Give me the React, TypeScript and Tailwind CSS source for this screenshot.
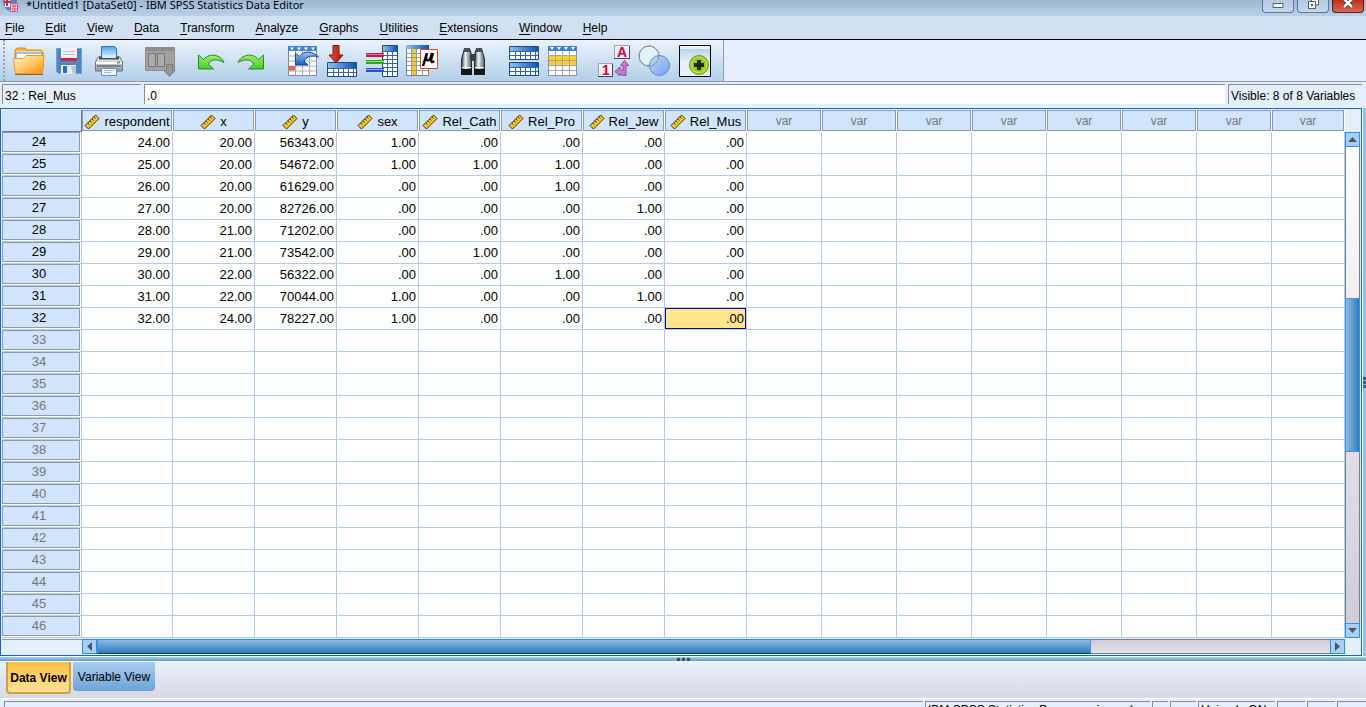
import { ReactNode } from 'react';

const MENUS = ['File', 'Edit', 'View', 'Data', 'Transform', 'Analyze', 'Graphs', 'Utilities', 'Extensions', 'Window', 'Help'];

const VARIABLES = ['respondent', 'x', 'y', 'sex', 'Rel_Cath', 'Rel_Pro', 'Rel_Jew', 'Rel_Mus'];

const EMPTY_VARIABLES = 8;

const CASES: string[][] = [
    ['24.00', '20.00', '56343.00', '1.00', '.00', '.00', '.00', '.00'],
    ['25.00', '20.00', '54672.00', '1.00', '1.00', '1.00', '.00', '.00'],
    ['26.00', '20.00', '61629.00', '.00', '.00', '1.00', '.00', '.00'],
    ['27.00', '20.00', '82726.00', '.00', '.00', '.00', '1.00', '.00'],
    ['28.00', '21.00', '71202.00', '.00', '.00', '.00', '.00', '.00'],
    ['29.00', '21.00', '73542.00', '.00', '1.00', '.00', '.00', '.00'],
    ['30.00', '22.00', '56322.00', '.00', '.00', '1.00', '.00', '.00'],
    ['31.00', '22.00', '70044.00', '1.00', '.00', '.00', '1.00', '.00'],
    ['32.00', '24.00', '78227.00', '1.00', '.00', '.00', '.00', '.00'],
];

const FIRST_ROW = 24;
const ROW_COUNT = 23;

function Icon({children}: { children: ReactNode }) {
    return (
        <svg width="34" height="34" viewBox="0 0 34 34" fill="none" aria-hidden="true">
            {children}
        </svg>
    )
}

function Defs() {
    return (
        <svg width="0" height="0" className="absolute" aria-hidden="true">
            <defs>
                <linearGradient id="folder" x1="0" y1="0" x2="1" y2="1">
                    <stop offset="0" stopColor="#fff3d0"/>
                    <stop offset="0.55" stopColor="#ffc65c"/>
                    <stop offset="1" stopColor="#f58a12"/>
                </linearGradient>
                <linearGradient id="blueHead" x1="0" y1="0" x2="1" y2="0">
                    <stop offset="0" stopColor="#8fc0ee"/>
                    <stop offset="1" stopColor="#0a55b4"/>
                </linearGradient>
                <linearGradient id="green" x1="0" y1="0" x2="0" y2="1">
                    <stop offset="0" stopColor="#a4ea78"/>
                    <stop offset="1" stopColor="#3fd024"/>
                </linearGradient>
                <linearGradient id="blueArrow" x1="0" y1="0" x2="0" y2="1">
                    <stop offset="0" stopColor="#9cc6f5"/>
                    <stop offset="1" stopColor="#1d5cc0"/>
                </linearGradient>
                <linearGradient id="red" x1="0" y1="0" x2="1" y2="0">
                    <stop offset="0" stopColor="#e85a48"/>
                    <stop offset="1" stopColor="#a81008"/>
                </linearGradient>
                <linearGradient id="paper" x1="0" y1="0" x2="0" y2="1">
                    <stop offset="0" stopColor="#4da6ef"/>
                    <stop offset="1" stopColor="#e0f2ff"/>
                </linearGradient>
                <linearGradient id="tube" x1="0" y1="0" x2="1" y2="0">
                    <stop offset="0" stopColor="#39434f"/>
                    <stop offset="0.4" stopColor="#eef2f5"/>
                    <stop offset="1" stopColor="#4d5863"/>
                </linearGradient>
                <linearGradient id="venn" x1="0" y1="0" x2="1" y2="1">
                    <stop offset="0" stopColor="#c6dcfa"/>
                    <stop offset="1" stopColor="#6d9fee"/>
                </linearGradient>
                <linearGradient id="steel" x1="0" y1="0" x2="0" y2="1">
                    <stop offset="0" stopColor="#f2f4f6"/>
                    <stop offset="1" stopColor="#8f969e"/>
                </linearGradient>
                <linearGradient id="panel" x1="0" y1="0" x2="0" y2="1">
                    <stop offset="0" stopColor="#b8d2ee"/>
                    <stop offset="1" stopColor="#e8f1fa"/>
                </linearGradient>
            </defs>
        </svg>
    )
}

function OpenIcon() {
    return (
        <Icon>
            <path d="M3 9V6l2-2h8l2 2h14l2 2v17H3z" fill="#f9b33c" stroke="#d9861a"/>
            <path d="M4 7h26v2H4z" fill="#ffe08a"/>
            <path d="M4 9h26v8H4z" fill="#fff" stroke="#4d9add"/>
            <path d="M1.500 14.500H11l3-3h18l-1.500 18h-27z" fill="url(#folder)" stroke="#ef9a2c"/>
            <path d="M3 30.500h28" stroke="#9e5a12"/>
        </Icon>
    )
}

function SaveIcon() {
    return (
        <Icon>
            <path d="M4.500 4.500h25v25h-23l-2-2z" fill="#4a86c0" stroke="#6ea3d2"/>
            <path d="M9 4h16v12H9z" fill="#f4f4f4"/>
            <path d="M11 7.500h12M11 10.500h12" stroke="#c2c2c2"/>
            <path d="M9 15.500h16" stroke="#d81f3f" strokeWidth="3"/>
            <path d="M9 21h15v9H9z" fill="#e8eaec"/>
            <path d="M11 22h4v7h-4z" fill="#2f6eae"/>
            <path d="M19 22h5v8h-3z" fill="#bfc4ca"/>
        </Icon>
    )
}

function PrintIcon() {
    return (
        <Icon>
            <path d="M9.500 2.500h13l2 2V14h-15z" fill="url(#paper)" stroke="#2a78c0"/>
            <path d="M6 13h22l2.500 5v9h-27v-9z" fill="url(#steel)" stroke="#6f757c"/>
            <path d="M7 12.500h20v3H7z" fill="#454c55"/>
            <path d="M10 11h14v3H10z" fill="#d3eaff"/>
            <path d="M4 18h26v2H4z" fill="#fff"/>
            <path d="M5 22h24" stroke="#7b8087" strokeWidth="2"/>
            <path d="M25 18.500h3" stroke="#38c02a" strokeWidth="2"/>
            <path d="M9.500 24.500h15v7h-15z" fill="#f4f8fc" stroke="#6a8db0"/>
            <path d="M12 26.500h10M12 28.500h7" stroke="#9db9d4"/>
        </Icon>
    )
}

function RecallIcon() {
    return (
        <Icon>
            <path d="M2.500 3.500h29v23h-29z" fill="#a2a2a2" stroke="#8e8e8e"/>
            <path d="M3 4h28v3H3z" fill="#8d8d8d"/>
            <path d="M5.500 9.500h7v13h-7zM14.500 9.500h7v13h-7z" fill="#acacac" stroke="#777"/>
            <path d="M23.500 20.500h6v6h2.500l-5.500 6-5.500-6h2.500z" fill="#999" stroke="#777"/>
        </Icon>
    )
}

function UndoIcon({flip = false}: { flip?: boolean }) {
    return (
        <Icon>
            <path
                d={flip
                    ? 'M29.500 11v14h-15l5-4.500C18 15.500 12 14 4 18.500 7 11 18 8 24.500 15.500z'
                    : 'M4.500 11v14h15l-5-4.500C16 15.500 22 14 30 18.500 27 11 16 8 9.500 15.500z'}
                fill="url(#green)" stroke="#209018"/>
        </Icon>
    )
}

function GoToCaseIcon() {
    return (
        <Icon>
            <path d="M3.500 2.500h28v29h-28z" fill="#fff" stroke="#7c8aa5"/>
            <path d="M3 2h29v5H3z" fill="#3f80d8"/>
            <path d="M5 3.500h4l-2 3zM12 3.500h4l-2 3zM19 3.500h4l-2 3zM26 3.500h4l-2 3z" fill="#fff"/>
            <path d="M10.500 7v24M17.500 7v24M24.500 7v24M4 12h27M4 17h27M4 22h27M4 27h27" stroke="#a5adbb"/>
            <path d="M4 22h6v4.500H4z" fill="#f45b62"/>
            <path d="M10.500 9v12H23l-4-4c3-5 9-6 14.500-4C28 7 19 6 14.500 12.500z" fill="url(#blueArrow)" stroke="#174a9c"/>
        </Icon>
    )
}

function GoToVariableIcon() {
    return (
        <Icon>
            <path d="M2.500 18.500h29v14h-29z" fill="#fff" stroke="#1b4a8c"/>
            <path d="M3 19h28v5H3z" fill="url(#blueHead)"/>
            <path d="M8.500 24v8M13.500 24v8M18.500 24v8M23.500 24v8M28.500 24v8M3 24.500h28M3 28.500h28" stroke="#3565a8"/>
            <path d="M8 1.500h6V11h4l-7 8-7-8h4z" fill="url(#red)" stroke="#8c120c"/>
        </Icon>
    )
}

function VariablesIcon() {
    return (
        <Icon>
            <path d="M17.500 1.500h15v31h-15z" fill="#fff" stroke="#1b4a8c"/>
            <path d="M18 2h14v5H18z" fill="url(#blueHead)"/>
            <path d="M22.500 7v25M27.500 7v25M18 7.500h14M18 11.500h14M18 15.500h14M18 19.500h14M18 23.500h14M18 27.500h14" stroke="#3565a8"/>
            <path d="M1 11h18" stroke="#b81f44" strokeWidth="4"/>
            <path d="M1 10.500h18" stroke="#f0708c"/>
            <path d="M1 18h18" stroke="#37a224" strokeWidth="4"/>
            <path d="M1 17.500h18" stroke="#8fe07c"/>
            <path d="M1 26h18" stroke="#3350b8" strokeWidth="4"/>
            <path d="M1 25.500h18" stroke="#8aa4f0"/>
        </Icon>
    )
}

function StatisticsIcon() {
    return (
        <Icon>
            <path d="M1.500 1.500h22v30h-22z" fill="#fff" stroke="#7c8088"/>
            <path d="M1 1h23v4H1z" fill="url(#blueHead)"/>
            <path d="M6 5h5v26H6z" fill="#f2c736"/>
            <path d="M6.500 5v26M11.500 5v26M17.500 5v26M2 9.500h21M2 13.500h21M2 17.500h21M2 21.500h21M2 26.500h21" stroke="#999"/>
            <path d="M15.500 5.500h17v19h-17z" fill="#fff" stroke="#e2431c"/>
            <path d="M22 9l-4 13M21.500 11c-2 6 3 9 5.500-2M28 9l-2 7c0 2 1 3 3 1" stroke="#000" strokeWidth="2.500"/>
        </Icon>
    )
}

function FindIcon() {
    return (
        <Icon>
            <path d="M8.500 4.500h5l2 6v20h-10V15z" fill="url(#tube)" stroke="#252a30"/>
            <path d="M20.500 4.500h5l3 10.500v15.500h-10v-20z" fill="url(#tube)" stroke="#252a30"/>
            <path d="M14 10h6v7h-6z" fill="#39404c"/>
            <path d="M8 4h6v4H8zM20 4h6v4h-6z" fill="#465061"/>
            <path d="M5 25h11v6H5zM18 25h11v6H18z" fill="#15181b"/>
            <path d="M6 23.500h9M19 23.500h9" stroke="#f4f4f4"/>
        </Icon>
    )
}

function SplitIcon() {
    return (
        <Icon>
            {[2, 18].map((y) => (
                <g key={y} transform={`translate(0 ${y})`}>
                    <path d="M2.500.5h29v13h-29z" fill="#fff" stroke="#1b4a8c"/>
                    <path d="M3 1h28v4H3z" fill="url(#blueHead)"/>
                    <path d="M8.500 5v8M13.500 5v8M18.500 5v8M23.500 5v8M28.500 5v8M3 5.500h28M3 9.500h28" stroke="#3565a8"/>
                </g>
            ))}
        </Icon>
    )
}

function SelectCasesIcon() {
    return (
        <Icon>
            <path d="M1.500 2.500h28v29h-28z" fill="#fff" stroke="#8a93a0"/>
            <path d="M1 2h29v5H1z" fill="#3f80d8"/>
            <path d="M3 3h4l-2 3zM10 3h4l-2 3zM17 3h4l-2 3zM24 3h4l-2 3z" fill="#fff"/>
            <path d="M2 12h27v9H2z" fill="#fbd02e"/>
            <path d="M8.500 7v24M15.500 7v24M22.500 7v24M2 11.500h27M2 16.500h27M2 21.500h27M2 26.500h27" stroke="#a5a89f"/>
        </Icon>
    )
}

function ValueLabelsIcon() {
    return (
        <Icon>
            <path d="M16.500 1.500h15v13h-15zM.5 19.500h14v13H.5z" fill="#f2f2f6" stroke="#9ca2ae"/>
            <path d="M16 14.500h16M31.500 2v13M0 32.500h15M14.500 20v13" stroke="#41485c"/>
            <text x="19" y="13" fontSize="14" fontWeight="700" fontFamily="Liberation Sans, sans-serif" fill="#d4003c">A</text>
            <text x="4" y="31" fontSize="14" fontWeight="700" fontFamily="Liberation Sans, sans-serif" fill="#d4003c">1</text>
            <path d="M26.500 16.500l4 5h-2.500v10h-3l-3-2v2.500l-5-4.500 5-4.500v2.500l3 1v-5h-2.500z" fill="#c57fcc" stroke="#94489e"/>
        </Icon>
    )
}

function VariableSetsIcon() {
    return (
        <Icon>
            <circle cx="11" cy="12" r="10" fill="#e4f0fc" stroke="#8190a6"/>
            <circle cx="21.500" cy="21.500" r="10" fill="url(#venn)" stroke="#6f86b4"/>
            <circle cx="11" cy="12" r="10" stroke="#8190a6"/>
        </Icon>
    )
}

function AddonIcon() {
    return (
        <Icon>
            <path d="M1.500 1.500h31v31h-31z" fill="#e8f1fa" stroke="#000"/>
            <path d="M2 5h30v13H2z" fill="url(#panel)"/>
            <circle cx="21" cy="21" r="9.500" fill="#9acb22" stroke="#5f9412"/>
            <circle cx="21" cy="21" r="8" stroke="#c4e85e"/>
            <path d="M16 21h10M21 16v10" stroke="#1d2a10" strokeWidth="4"/>
        </Icon>
    )
}

function RulerIcon() {
    return (
        <svg width="16" height="16" viewBox="0 0 16 16" fill="none" aria-hidden="true" className="shrink-0">
            <path d="M1 11.500L11.500 1 15 4.500 4.500 15z" fill="#f7c52c" stroke="#3d3208"/>
            <path d="M4 9l1.500 1.500M6 7l1.500 1.500M8 5l1.500 1.500M10 3l1.500 1.500" stroke="#3d3208"/>
        </svg>
    )
}

type Tool = { label: string, icon: ReactNode }

const TOOL_GROUPS: Tool[][] = [
    [
        {label: 'Open', icon: <OpenIcon/>},
        {label: 'Save', icon: <SaveIcon/>},
        {label: 'Print', icon: <PrintIcon/>},
    ],
    [{label: 'Recall dialogs', icon: <RecallIcon/>}],
    [
        {label: 'Undo', icon: <UndoIcon/>},
        {label: 'Redo', icon: <UndoIcon flip/>},
    ],
    [
        {label: 'Go to case', icon: <GoToCaseIcon/>},
        {label: 'Go to variable', icon: <GoToVariableIcon/>},
        {label: 'Variables', icon: <VariablesIcon/>},
        {label: 'Run statistics', icon: <StatisticsIcon/>},
    ],
    [{label: 'Find', icon: <FindIcon/>}],
    [
        {label: 'Split file', icon: <SplitIcon/>},
        {label: 'Select cases', icon: <SelectCasesIcon/>},
    ],
    [
        {label: 'Value labels', icon: <ValueLabelsIcon/>},
        {label: 'Variable sets', icon: <VariableSetsIcon/>},
        {label: 'Customize', icon: <AddonIcon/>},
    ],
];

function TitleBar() {
    return (
        <header className="flex h-4 justify-between bg-linear-to-b from-[#9db8d4] to-[#b9d0e8]">
            <div className="flex items-start gap-2 pl-0.5">
                <svg width="16" height="12" viewBox="0 0 16 12" fill="none" aria-hidden="true">
                    <path d="M1 0h14v5c-1 5-8 7-11 4-2-2-3-6-3-9z" fill="#4f86c0"/>
                    <path d="M3 0h5v7H3z" fill="#fff"/>
                    <path d="M2 2h6M5 0v6" stroke="#d0203c" strokeWidth="2"/>
                    <path d="M8.500 3.500h7v8h-7z" fill="#fff" stroke="#d0506c"/>
                    <path d="M11 4v7M13 4v7M9 6h6M9 9h6" stroke="#d0506c"/>
                </svg>
                <h1 className="font-['Noto_Sans',sans-serif] text-[11px] leading-[10px] whitespace-nowrap">
                    *Untitled1 [DataSet0] - IBM SPSS Statistics Data Editor
                </h1>
            </div>
            <div className="flex h-[13px] gap-[3px] pr-0.5">
                <button type="button" aria-label="Minimize"
                        className="flex w-8 justify-center rounded-b border border-t-0 border-[#5f7896] bg-linear-to-b from-[#b4cae2] to-[#c4d8ec]">
                    <svg width="12" height="9" viewBox="0 0 12 9" aria-hidden="true">
                        <path d="M1 3.500h10v4H1z" fill="#fff" stroke="#505a68"/>
                    </svg>
                </button>
                <button type="button" aria-label="Restore"
                        className="flex w-8 justify-center rounded-b border border-t-0 border-[#5f7896] bg-linear-to-b from-[#b4cae2] to-[#c4d8ec]">
                    <svg width="13" height="9" viewBox="0 0 13 9" aria-hidden="true">
                        <path d="M4.500-2h7v7h-7z" fill="#fff" stroke="#505a68"/>
                        <path d="M1.500 1.500h7v7h-7z" fill="#fff" stroke="#505a68"/>
                        <path d="M4 4h2v2H4z" fill="#505a68"/>
                    </svg>
                </button>
                <button type="button" aria-label="Close"
                        className="flex w-8 justify-center rounded-b border border-t-0 border-[#5c1c1c] bg-linear-to-b from-[#b82f1c] to-[#d8694a]">
                    <svg width="12" height="9" viewBox="0 0 12 9" aria-hidden="true">
                        <path d="M2-1l8 8M10-1L2 7" stroke="#4a3038" strokeWidth="4"/>
                        <path d="M2-1l8 8M10-1L2 7" stroke="#fff" strokeWidth="2.500"/>
                    </svg>
                </button>
            </div>
        </header>
    )
}

function MenuBar() {
    return (
        <nav className="flex h-6 items-center gap-[21px] border-b border-black bg-[#cfe1f2] pl-[5px]">
            {MENUS.map((menu) => (
                <button key={menu} type="button">
                    <span className="underline underline-offset-2">{menu[0]}</span>{menu.slice(1)}
                </button>
            ))}
        </nav>
    )
}

function Toolbar() {
    return (
        <div className="flex h-[42px] border-b border-[#8f9bab]">
            <div className="flex items-center gap-[11px] border-r border-[#8f9bab] bg-linear-to-b from-[#eaf3fc] to-[#b3cfea] pr-2 pl-[3px]">
                <div className="-mr-2 h-full w-[3px] border-l-2 border-dotted border-[#93a5ba]"/>
                {TOOL_GROUPS.map((group) => (
                    <div key={group[0].label} className="flex">
                        {group.map((tool) => (
                            <button key={tool.label} type="button" aria-label={tool.label}
                                    className="flex w-10 justify-center">
                                {tool.icon}
                            </button>
                        ))}
                    </div>
                ))}
            </div>
        </div>
    )
}

function CellEditor() {
    return (
        <div className="flex h-[26px] gap-[3px] pt-0.5 pb-1 pl-0.5">
            <label htmlFor="cell" className="flex w-[139px] items-center border-t border-l border-[#8c8c8c] pt-0.5 pl-0.5">
                32 : Rel_Mus
            </label>
            <input id="cell" type="text" defaultValue=".0"
                   className="min-w-0 flex-1 border-t border-l border-[#8c8c8c] bg-white pt-0.5 pl-0.5"/>
            <div className="flex w-[134px] items-center border-t border-l border-[#8c8c8c] pt-0.5 pl-0.5 whitespace-nowrap">
                Visible: 8 of 8 Variables
            </div>
            <div className="w-px"/>
        </div>
    )
}

function DataTable() {
    const rows = Array.from({length: ROW_COUNT}, (_, i) => FIRST_ROW + i);
    const empty = Array.from({length: EMPTY_VARIABLES}, (_, i) => i);

    return (
        <table className="w-full table-fixed border-separate border-spacing-0 text-[13px] leading-4">
            <colgroup>
                <col className="w-20"/>
                <col className="w-[91px]"/>
                {VARIABLES.slice(1).map((name) => <col key={name} className="w-[82px]"/>)}
                {empty.slice(1).map((i) => <col key={i} className="w-[75px]"/>)}
                <col/>
            </colgroup>
            <thead>
                <tr className="h-[22px]">
                    <th className="border-r border-b border-[#6d7890] bg-[#d0e4fc] p-0"/>
                    {VARIABLES.map((name) => (
                        <th key={name} scope="col" className="p-0 font-normal">
                            <div className="mr-px mb-px flex h-[21px] items-center justify-center gap-1 border border-[#8e98b0] bg-[#d0e4fc] pt-0.5">
                                <RulerIcon/>
                                {name}
                            </div>
                        </th>
                    ))}
                    {empty.map((i) => (
                        <th key={i} scope="col" className="p-0 text-xs font-normal text-[#777]">
                            <div className="mr-px mb-px flex h-[21px] items-center justify-center border border-[#8e98b0] bg-[#d0e4fc]">
                                var
                            </div>
                        </th>
                    ))}
                </tr>
            </thead>
            <tbody>
                {rows.map((row, i) => {
                    const values = CASES[i];
                    return (
                        <tr key={row} className="h-[22px]">
                            <th scope="row" className="border-r border-b border-[#b0cce8] p-0 font-normal">
                                <div className={`mr-px mb-px flex h-5 items-center justify-center border border-[#8e98b0] bg-[#d0e4fc] pr-1 ${values ? 'text-black' : 'text-[#777]'}`}>
                                    {row}
                                </div>
                            </th>
                            {VARIABLES.map((name, col) => {
                                const selected = row === 32 && name === 'Rel_Mus';
                                return (
                                    <td key={name}
                                        className={`border-r border-b border-[#b0cce8] p-0 pr-0.5 text-right ${selected ? 'bg-[#ffe48c] bg-clip-padding shadow-[inset_0_0_0_1px_#0a0aa0]' : ''}`}>
                                        {values?.[col]}
                                    </td>
                                );
                            })}
                            {empty.map((n) => <td key={n} className="border-r border-b border-[#b0cce8] p-0"/>)}
                        </tr>
                    );
                })}
            </tbody>
        </table>
    )
}

function ScrollArrow({label, path}: { label: string, path: string }) {
    return (
        <button type="button" aria-label={label}
                className="flex size-[15px] shrink-0 items-center justify-center border border-[#2f8fe8] bg-[#a6d0fb]">
            <svg width="9" height="9" viewBox="0 0 9 9" aria-hidden="true">
                <path d={path} fill="#555"/>
            </svg>
        </button>
    )
}

function VerticalScrollbar() {
    return (
        <div className="flex w-[15px] flex-col pt-[22px]">
            <ScrollArrow label="Scroll up" path="M0 7l4.500-5L9 7z"/>
            <div className="flex flex-1 flex-col border-x border-[#7b7f88] bg-linear-to-b from-white to-[#cfcddb]">
                <div className="grow-[152]"/>
                <div className="-mx-px grow-[152] border border-[#3d94e2] bg-linear-to-r from-[#8bbbe4] to-[#2f7cbe]"/>
                <div className="grow-[172]"/>
            </div>
            <ScrollArrow label="Scroll down" path="M0 2l4.500 5L9 2z"/>
        </div>
    )
}

function HorizontalScrollbar() {
    return (
        <div className="flex h-[15px] flex-1">
            <ScrollArrow label="Scroll left" path="M7 0L2 4.500 7 9z"/>
            <div className="flex flex-1 border-y border-[#7b7f88] bg-linear-to-b from-[#cfcddb] to-[#e2e0ea]">
                <div className="-my-px grow-[994] border border-t-[#2f8fe8] border-r-[#3d94e2] border-b-[#10406c] border-l-[#3d94e2] bg-linear-to-b from-[#8bbbe4] to-[#2f7cbe]"/>
                <div className="grow-[239]"/>
            </div>
            <ScrollArrow label="Scroll right" path="M2 0l5 4.500L2 9z"/>
        </div>
    )
}

function StatusBar() {
    const cell = 'border-t border-l border-[#8c8c8c] pl-0.5 whitespace-nowrap';
    return (
        <footer className="flex h-[9px] gap-0.5 border-t border-white pt-0.5 pl-1">
            <div className={`${cell} flex-1`}/>
            <div className={`${cell} w-[225px]`}>IBM SPSS Statistics Processor is ready</div>
            <div className={`${cell} w-4`}/>
            <div className={`${cell} w-[26px]`}/>
            <div className={`${cell} w-[77px]`}>Unicode:ON</div>
            <div className={`${cell} w-7`}/>
            <div className={`${cell} w-7`}/>
            <div className={`${cell} w-[29px]`}/>
        </footer>
    )
}

export default function App() {
    return (
        <div className="flex h-screen flex-col overflow-hidden bg-[#e3effc] font-['Liberation_Sans',Arial,sans-serif] text-xs text-black">
            <Defs/>
            <TitleBar/>
            <MenuBar/>
            <Toolbar/>
            <CellEditor/>
            <main className="flex min-h-0 flex-1">
                <div className="flex min-w-0 flex-1 flex-col border border-[#1467b4] pt-px pr-px pl-px">
                    <div className="flex min-h-0 flex-1">
                        <div className="min-w-0 flex-1 overflow-hidden bg-white">
                            <DataTable/>
                        </div>
                        <VerticalScrollbar/>
                    </div>
                    <div className="flex h-[17px] pt-px">
                        <div className="w-20 border-t border-[#8e98b0]"/>
                        <HorizontalScrollbar/>
                        <div className="w-[15px]"/>
                    </div>
                </div>
                <div className="flex w-1 flex-col items-center justify-center gap-px border-l border-white bg-[#8dc0f0]">
                    <i className="size-[3px] bg-[#3a5f94]"/>
                    <i className="size-[3px] bg-[#3a5f94]"/>
                    <i className="size-[3px] bg-[#3a5f94]"/>
                </div>
            </main>
            <div className="flex h-[6px] items-center justify-center gap-0.5 border-y border-white bg-linear-to-b from-[#9dd2fb] to-[#6598c6]">
                <i className="size-[3px] bg-[#2c4f80]"/>
                <i className="size-[3px] bg-[#2c4f80]"/>
                <i className="size-[3px] bg-[#2c4f80]"/>
            </div>
            <div className="flex h-9 items-start gap-0.5 bg-linear-to-b from-[#e6f0fc] to-[#d9d8e6] pl-1.5">
                <button type="button"
                        className="h-8 w-[65px] rounded-b border-2 border-t-0 border-[#cfa03c] bg-linear-to-b from-[#ffbf38] to-[#ffe296] pt-0.5 font-bold whitespace-nowrap">
                    Data View
                </button>
                <button type="button"
                        className="h-[29px] w-[82px] rounded-b bg-linear-to-b from-[#a9cdec] to-[#6ea3d6] whitespace-nowrap">
                    Variable View
                </button>
            </div>
            <StatusBar/>
        </div>
    )
}
